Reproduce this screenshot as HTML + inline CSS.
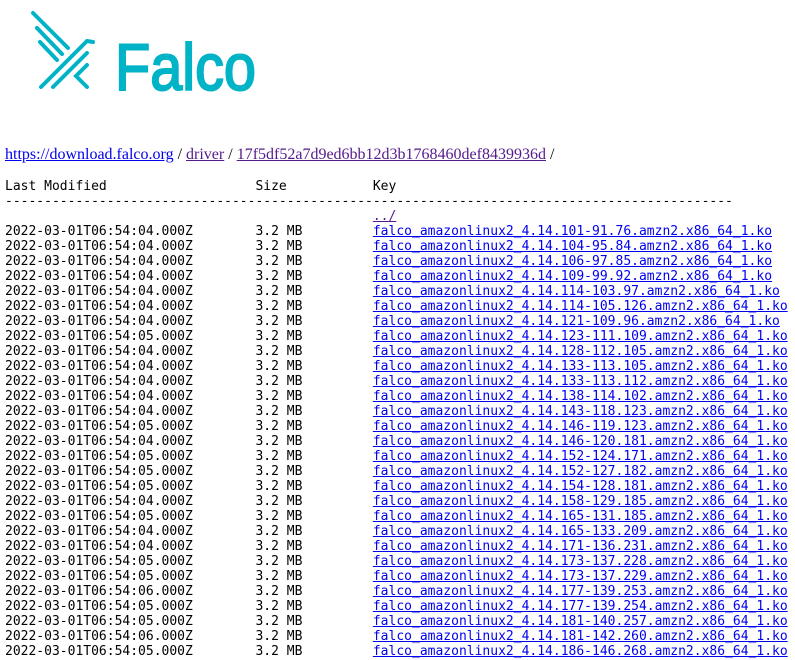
<!DOCTYPE html>
<html><head><meta charset="utf-8">
<style>
html,body{margin:0;padding:0;background:#fff;}
body{width:795px;height:660px;overflow:hidden;position:relative;}
#logo{position:absolute;left:0;top:0;}
#crumb{position:absolute;left:5px;top:145px;font-family:"Liberation Serif",serif;font-size:16px;line-height:20px;white-space:nowrap;}
a{color:#0000ee;}
a.v{color:#551a8b;}
pre{position:absolute;left:5px;top:179px;margin:0;font-family:"DejaVu Sans Mono",monospace;font-size:13px;line-height:15px;color:#000;}
</style></head><body>
<svg id="logo" width="270" height="100" viewBox="0 0 270 100">
<g stroke="#00b3c6" stroke-width="4" stroke-linecap="round" fill="none">
<line x1="33" y1="13" x2="68" y2="48"/>
<line x1="37" y1="28" x2="62" y2="54"/>
<line x1="40" y1="42" x2="57" y2="60"/>
<path d="M41 87 L87 41 L93 42"/>
<line x1="53" y1="87" x2="87" y2="53"/>
<path d="M87 65 L76 76 L87 87"/>
</g>
<text x="115" y="90" font-family="Liberation Sans, sans-serif" font-size="66" fill="#00b3c6" stroke="#00b3c6" stroke-width="2" textLength="141" lengthAdjust="spacingAndGlyphs">Falco</text>
</svg>
<div id="crumb"><a href="#">https://download.falco.org</a> / <a class="v" href="#">driver</a> / <a class="v" href="#">17f5df52a7d9ed6bb12d3b1768460def8439936d</a> /</div>
<pre>Last Modified                   Size           Key
---------------------------------------------------------------------------------------------
                                               <a class="v" href="#">../</a>
2022-03-01T06:54:04.000Z        3.2 MB         <a href="#">falco_amazonlinux2_4.14.101-91.76.amzn2.x86_64_1.ko</a>
2022-03-01T06:54:04.000Z        3.2 MB         <a href="#">falco_amazonlinux2_4.14.104-95.84.amzn2.x86_64_1.ko</a>
2022-03-01T06:54:04.000Z        3.2 MB         <a href="#">falco_amazonlinux2_4.14.106-97.85.amzn2.x86_64_1.ko</a>
2022-03-01T06:54:04.000Z        3.2 MB         <a href="#">falco_amazonlinux2_4.14.109-99.92.amzn2.x86_64_1.ko</a>
2022-03-01T06:54:04.000Z        3.2 MB         <a href="#">falco_amazonlinux2_4.14.114-103.97.amzn2.x86_64_1.ko</a>
2022-03-01T06:54:04.000Z        3.2 MB         <a href="#">falco_amazonlinux2_4.14.114-105.126.amzn2.x86_64_1.ko</a>
2022-03-01T06:54:04.000Z        3.2 MB         <a href="#">falco_amazonlinux2_4.14.121-109.96.amzn2.x86_64_1.ko</a>
2022-03-01T06:54:05.000Z        3.2 MB         <a href="#">falco_amazonlinux2_4.14.123-111.109.amzn2.x86_64_1.ko</a>
2022-03-01T06:54:04.000Z        3.2 MB         <a href="#">falco_amazonlinux2_4.14.128-112.105.amzn2.x86_64_1.ko</a>
2022-03-01T06:54:04.000Z        3.2 MB         <a href="#">falco_amazonlinux2_4.14.133-113.105.amzn2.x86_64_1.ko</a>
2022-03-01T06:54:04.000Z        3.2 MB         <a href="#">falco_amazonlinux2_4.14.133-113.112.amzn2.x86_64_1.ko</a>
2022-03-01T06:54:04.000Z        3.2 MB         <a href="#">falco_amazonlinux2_4.14.138-114.102.amzn2.x86_64_1.ko</a>
2022-03-01T06:54:04.000Z        3.2 MB         <a href="#">falco_amazonlinux2_4.14.143-118.123.amzn2.x86_64_1.ko</a>
2022-03-01T06:54:05.000Z        3.2 MB         <a href="#">falco_amazonlinux2_4.14.146-119.123.amzn2.x86_64_1.ko</a>
2022-03-01T06:54:04.000Z        3.2 MB         <a href="#">falco_amazonlinux2_4.14.146-120.181.amzn2.x86_64_1.ko</a>
2022-03-01T06:54:05.000Z        3.2 MB         <a href="#">falco_amazonlinux2_4.14.152-124.171.amzn2.x86_64_1.ko</a>
2022-03-01T06:54:05.000Z        3.2 MB         <a href="#">falco_amazonlinux2_4.14.152-127.182.amzn2.x86_64_1.ko</a>
2022-03-01T06:54:05.000Z        3.2 MB         <a href="#">falco_amazonlinux2_4.14.154-128.181.amzn2.x86_64_1.ko</a>
2022-03-01T06:54:04.000Z        3.2 MB         <a href="#">falco_amazonlinux2_4.14.158-129.185.amzn2.x86_64_1.ko</a>
2022-03-01T06:54:05.000Z        3.2 MB         <a href="#">falco_amazonlinux2_4.14.165-131.185.amzn2.x86_64_1.ko</a>
2022-03-01T06:54:04.000Z        3.2 MB         <a href="#">falco_amazonlinux2_4.14.165-133.209.amzn2.x86_64_1.ko</a>
2022-03-01T06:54:04.000Z        3.2 MB         <a href="#">falco_amazonlinux2_4.14.171-136.231.amzn2.x86_64_1.ko</a>
2022-03-01T06:54:05.000Z        3.2 MB         <a href="#">falco_amazonlinux2_4.14.173-137.228.amzn2.x86_64_1.ko</a>
2022-03-01T06:54:05.000Z        3.2 MB         <a href="#">falco_amazonlinux2_4.14.173-137.229.amzn2.x86_64_1.ko</a>
2022-03-01T06:54:06.000Z        3.2 MB         <a href="#">falco_amazonlinux2_4.14.177-139.253.amzn2.x86_64_1.ko</a>
2022-03-01T06:54:05.000Z        3.2 MB         <a href="#">falco_amazonlinux2_4.14.177-139.254.amzn2.x86_64_1.ko</a>
2022-03-01T06:54:05.000Z        3.2 MB         <a href="#">falco_amazonlinux2_4.14.181-140.257.amzn2.x86_64_1.ko</a>
2022-03-01T06:54:06.000Z        3.2 MB         <a href="#">falco_amazonlinux2_4.14.181-142.260.amzn2.x86_64_1.ko</a>
2022-03-01T06:54:05.000Z        3.2 MB         <a href="#">falco_amazonlinux2_4.14.186-146.268.amzn2.x86_64_1.ko</a>
</pre>
</body></html>
